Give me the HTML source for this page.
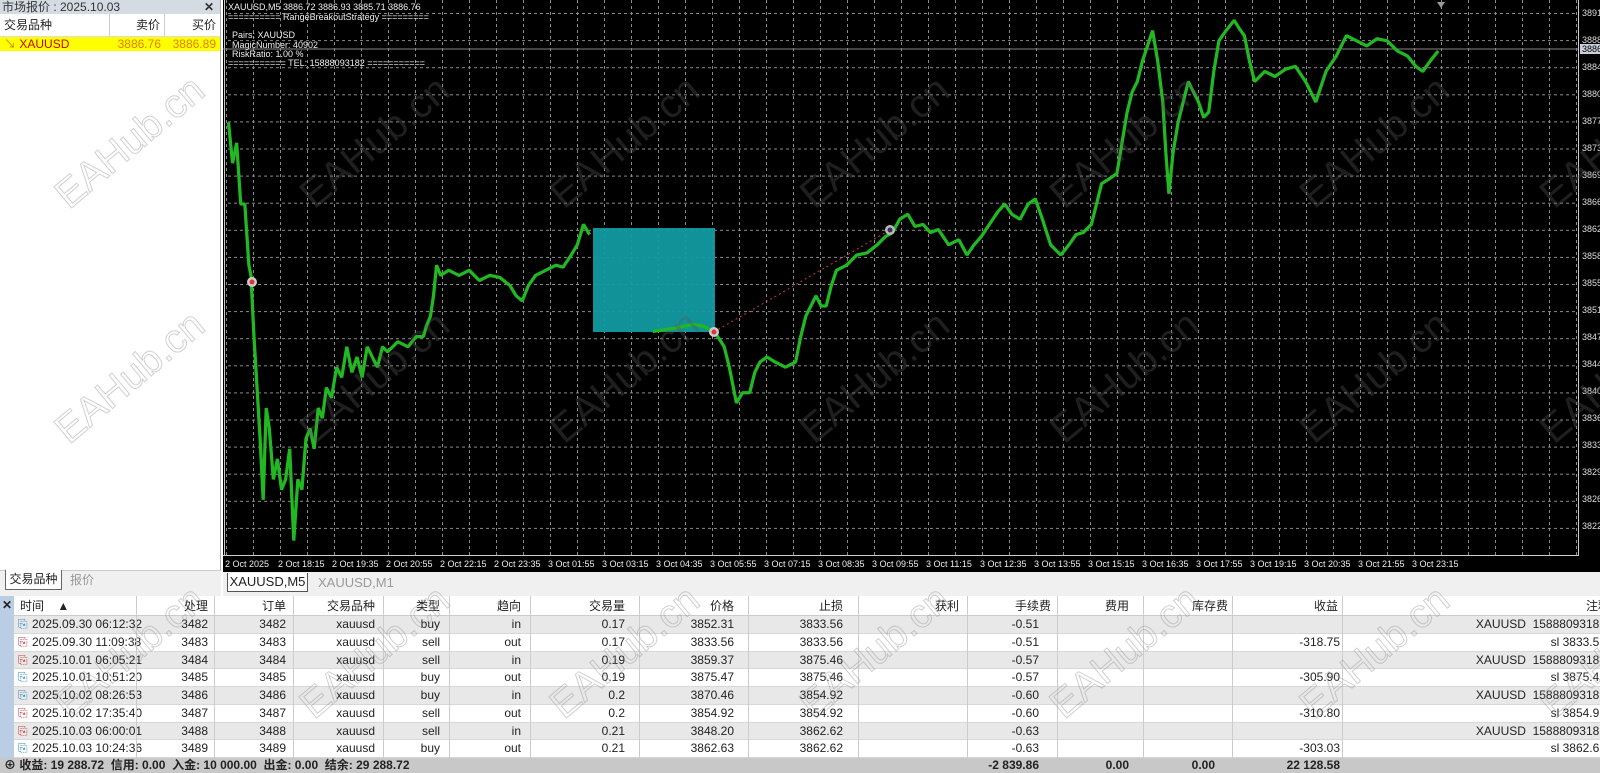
<!DOCTYPE html>
<html><head><meta charset="utf-8"><style>
*{margin:0;padding:0;box-sizing:border-box}
body{width:1600px;height:773px;overflow:hidden;background:#fff;font-family:"Liberation Sans","Noto Sans CJK SC",sans-serif;font-size:12px;color:#222;position:relative}
.abs{position:absolute}
#left{left:0;top:0;width:221px;height:596px;background:#fff;border-right:1px solid #aaa}
.ttl{height:14px;background:#d5dbe3;font-size:12px;line-height:14px;padding-left:2px;color:#333}
.hdr{height:23px;display:flex;border-bottom:1px solid #ddd;line-height:23px}
.hdr div,.yel div{padding:0 4px}
.yel{height:14px;background:#ffff00;display:flex;line-height:14px}
#chart{left:223px;top:0;width:1377px;height:572px;background:#000}
#tabs{left:223px;top:572px;width:1377px;height:24px;background:#f0f0f0}
#tbl{left:0;top:596px;width:1600px}
.row{position:absolute;left:14px;width:1586px;height:17.75px;border-bottom:1px solid #d8d8d8}
.row span,.th span{position:absolute;top:0;text-align:right;white-space:nowrap;line-height:17px}
.wm{position:absolute;font-size:40px;font-family:"Liberation Sans",sans-serif;color:transparent;-webkit-text-stroke:1px rgba(150,150,150,.45);transform:rotate(-40deg);white-space:nowrap}
.wmc{color:rgba(90,90,90,.35);-webkit-text-stroke:0}
</style></head><body>

<div id="left" class="abs">
 <div class="ttl">市场报价 : 2025.10.03<span style="float:right;margin-right:6px;font-weight:bold">✕</span></div>
 <div class="hdr"><div style="width:110px;border-right:1px solid #ccc">交易品种</div><div style="width:55px;text-align:right;border-right:1px solid #ccc">卖价</div><div style="width:55px;text-align:right">买价</div></div>
 <div class="yel"><div style="width:110px;color:#c00"><span style="color:#d08000">↘</span> XAUUSD</div><div style="width:55px;text-align:right;color:#e08000">3886.76</div><div style="width:55px;text-align:right;color:#e08000">3886.89</div></div>
 <div class="abs" style="left:0;top:570px;width:221px;height:26px;background:#f0f0f0;border-top:1px solid #ccc"></div>
 <div class="abs" style="left:5px;top:570px;width:57px;height:20px;background:#fff;border:1px solid #666;border-top:none;text-align:center;line-height:19px">交易品种</div>
 <div class="abs" style="left:70px;top:572px;color:#999;line-height:16px">报价</div>
</div>

<div id="chart" class="abs">
<svg width="1377" height="572" viewBox="223 0 1377 572" style="position:absolute;left:0;top:0">
 <defs>
  <pattern id="gv" x="10" y="0" width="27" height="6" patternUnits="userSpaceOnUse"><rect x="0" y="0" width="1" height="3" fill="#8a8a8a"/></pattern>
  <pattern id="gh" x="0" y="13" width="6" height="27.1" patternUnits="userSpaceOnUse"><rect x="0" y="0" width="3" height="1" fill="#8a8a8a"/></pattern>
 </defs>
 <rect x="225" y="0" width="1353" height="555" fill="url(#gv)"/>
 <rect x="225" y="0" width="1353" height="555" fill="url(#gh)"/>
 <line x1="223" y1="555.5" x2="1578" y2="555.5" stroke="#ccc"/>
 <line x1="1578.5" y1="0" x2="1578.5" y2="556" stroke="#ccc"/>
 <line x1="224.5" y1="0" x2="224.5" y2="556" stroke="#ccc"/>
 <line x1="223" y1="49" x2="1578" y2="49" stroke="#888"/>
 <rect x="593" y="228" width="122" height="104" fill="#129aa0" opacity="0.95"/>
 <g transform="scale(1.02)" fill="none" stroke="#22b822" stroke-width="3.2" stroke-linejoin="bevel">
  <polyline points="224,120 228,160 232,140 236,200 240,200 244,260 246,270 249,330 252,380 255,430 258,490 261,400 264,420 268,470 272,450 276,480 280,470 284,440 288,530 292,470 296,480 300,430 304,420 308,440 312,400 316,410 320,380 325,390 330,360 335,370 340,340 345,365 350,350 355,370 360,340 365,350 370,360 375,340 380,345 390,335 400,340 408,330 415,330 418,320 422,310 425,290 428,260 432,270 440,265 450,270 460,265 470,275 480,270 490,272 500,280 506,290 512,295 518,280 525,270 535,265 545,260 552,262 560,250 566,240 572,220 578,230"/>
  <polyline points="640,325 660,322 680,318 690,320 700,325 705,332 710,340 715,360 722,395 728,385 735,385 740,365 745,355 752,350 760,355 770,360 780,355 785,330 790,310 795,300 800,290 805,300 810,300 815,280 820,265 830,260 840,250 850,248 860,240 868,232 875,228 882,215 890,210 897,222 905,220 912,228 920,225 930,240 940,235 948,250 955,240 962,232 970,220 978,208 985,200 992,210 1000,215 1008,200 1015,195 1022,215 1030,240 1035,245 1040,250 1048,240 1055,230 1062,228 1070,220 1075,200 1080,180 1088,175 1095,170 1100,140 1105,110 1110,90 1115,80 1120,60 1125,45 1130,30 1135,60 1140,100 1143,150 1146,190 1150,150 1155,120 1160,100 1165,80 1170,90 1175,100 1180,115 1185,110 1190,70 1195,40 1202,30 1210,20 1215,28 1220,35 1225,60 1230,80 1240,70 1250,75 1260,68 1270,65 1280,80 1290,100 1295,85 1300,70 1310,55 1320,35 1330,40 1340,45 1350,38 1360,40 1370,50 1380,55 1388,65 1395,70 1402,60 1410,50"/>
 </g>
 <line x1="714" y1="332" x2="890" y2="230" stroke="#c04040" stroke-width="1" stroke-dasharray="2,3"/>
 <circle cx="252" cy="282" r="5" fill="#ccc"/><circle cx="252" cy="282" r="2.5" fill="#d33"/>
 <circle cx="714" cy="332" r="5" fill="#ccc"/><circle cx="714" cy="332" r="2.5" fill="#d33"/>
 <circle cx="890" cy="230" r="5" fill="#bbb"/><circle cx="890" cy="230" r="2.5" fill="#335"/>
 <path d="M1437 2 l4 6 l4 -6z" fill="#999"/>
 <g font-family="Liberation Sans,sans-serif" font-size="9" fill="#ddd">
  <text x="1582" y="16">3891</text><text x="1582" y="43">3888</text>
  <rect x="1580" y="44" width="20" height="10" fill="#c8d0dc"/><text x="1582" y="52" fill="#000">3886</text>
  <text x="1582" y="70">3884</text><text x="1582" y="97">3880</text><text x="1582" y="124">3877</text><text x="1582" y="151">3873</text><text x="1582" y="178">3869</text><text x="1582" y="205">3866</text><text x="1582" y="232">3862</text><text x="1582" y="259">3858</text><text x="1582" y="286">3855</text><text x="1582" y="313">3851</text><text x="1582" y="340">3847</text><text x="1582" y="367">3844</text><text x="1582" y="394">3840</text><text x="1582" y="421">3836</text><text x="1582" y="448">3833</text><text x="1582" y="475">3829</text><text x="1582" y="502">3826</text><text x="1582" y="529">3822</text>
  <g font-size="9" fill="#eee">
  <text x="225" y="567">2 Oct 2025</text><text x="278" y="567">2 Oct 18:15</text><text x="332" y="567">2 Oct 19:35</text><text x="386" y="567">2 Oct 20:55</text><text x="440" y="567">2 Oct 22:15</text><text x="494" y="567">2 Oct 23:35</text><text x="548" y="567">3 Oct 01:55</text><text x="602" y="567">3 Oct 03:15</text><text x="656" y="567">3 Oct 04:35</text><text x="710" y="567">3 Oct 05:55</text><text x="764" y="567">3 Oct 07:15</text><text x="818" y="567">3 Oct 08:35</text><text x="872" y="567">3 Oct 09:55</text><text x="926" y="567">3 Oct 11:15</text><text x="980" y="567">3 Oct 12:35</text><text x="1034" y="567">3 Oct 13:55</text><text x="1088" y="567">3 Oct 15:15</text><text x="1142" y="567">3 Oct 16:35</text><text x="1196" y="567">3 Oct 17:55</text><text x="1250" y="567">3 Oct 19:15</text><text x="1304" y="567">3 Oct 20:35</text><text x="1358" y="567">3 Oct 21:55</text><text x="1412" y="567">3 Oct 23:15</text>
  </g>
  <g fill="#eee" font-size="9">
  <text x="228" y="10">XAUUSD,M5  3886.72 3886.93 3885.71 3886.76</text>
  <text x="228" y="20">========== RangeBreakoutStrategy =========</text>
  <text x="232" y="38">Pairs: XAUUSD</text>
  <text x="232" y="48">MagicNumber: 40902</text>
  <text x="232" y="57">RiskRatio: 1.00 %</text>
  <text x="228" y="66">=========== TEL: 15888093182 ===========</text>
  </g>
 </g>
</svg>
</div>

<div id="tabs" class="abs">
 <div class="abs" style="left:4px;top:1px;width:81px;height:19px;background:#fff;border:1px solid #555;border-top:none;font-size:13px;text-align:center;line-height:18px">XAUUSD,M5</div>
 <div class="abs" style="left:95px;top:3px;color:#999;font-size:13px">XAUUSD,M1</div>
</div>

<div id="tbl" class="abs">
 <div class="abs" style="left:0;top:0;width:14px;height:162px;background:#b9cde5"><div style="font-weight:bold;text-align:center;line-height:18px">✕</div></div>
 <div class="row th" style="top:0;height:20px;background:#fff;border-bottom:1px solid #ccc">
  <span style="left:6px;text-align:left;line-height:20px">时间 &nbsp;&nbsp;&nbsp;▲</span>
  <span style="right:1392px;line-height:20px">处理</span><span style="right:1314px;line-height:20px">订单</span><span style="right:1225px;line-height:20px">交易品种</span><span style="right:1160px;line-height:20px">类型</span><span style="right:1079px;line-height:20px">趋向</span><span style="right:975px;line-height:20px">交易量</span><span style="right:866px;line-height:20px">价格</span><span style="right:757px;line-height:20px">止损</span><span style="right:641px;line-height:20px">获利</span><span style="right:549px;line-height:20px">手续费</span><span style="right:471px;line-height:20px">费用</span><span style="right:372px;line-height:20px">库存费</span><span style="right:262px;line-height:20px">收益</span><span style="right:-10px;line-height:20px">注释</span>
 </div>
 <div class="abs" style="left:0;top:162px;width:1600px;height:15px;background:#c8c8c8;font-weight:bold;line-height:15px;font-size:12px">
  <span style="position:absolute;left:4px">⊕ 收益: 19 288.72 &nbsp;信用: 0.00 &nbsp;入金: 10 000.00 &nbsp;出金: 0.00 &nbsp;结余: 29 288.72</span>
  <span style="position:absolute;right:561px">-2 839.86</span><span style="position:absolute;right:471px">0.00</span><span style="position:absolute;right:385px">0.00</span><span style="position:absolute;right:260px">22 128.58</span>
 </div>
</div>
<div class="abs" style="left:0;top:616px;width:1600px">
 <div class="row" style="top:0;background:#e8e8e8"><span style="left:4px;color:#3a8ac0">⎘</span><span style="left:18px;text-align:left">2025.09.30 06:12:32</span><span style="right:1392px">3482</span><span style="right:1314px">3482</span><span style="right:1225px">xauusd</span><span style="right:1160px">buy</span><span style="right:1079px">in</span><span style="right:975px">0.17</span><span style="right:866px">3852.31</span><span style="right:757px">3833.56</span><span style="right:561px">-0.51</span><span style="right:-6px">XAUUSD &nbsp;15888093182</span></div>
 <div class="row" style="top:17.75px"><span style="left:4px;color:#c04040">⎘</span><span style="left:18px;text-align:left">2025.09.30 11:09:38</span><span style="right:1392px">3483</span><span style="right:1314px">3483</span><span style="right:1225px">xauusd</span><span style="right:1160px">sell</span><span style="right:1079px">out</span><span style="right:975px">0.17</span><span style="right:866px">3833.56</span><span style="right:757px">3833.56</span><span style="right:561px">-0.51</span><span style="right:260px">-318.75</span><span style="right:-6px">sl 3833.56</span></div>
 <div class="row" style="top:35.5px;background:#e8e8e8"><span style="left:4px;color:#c04040">⎘</span><span style="left:18px;text-align:left">2025.10.01 06:05:21</span><span style="right:1392px">3484</span><span style="right:1314px">3484</span><span style="right:1225px">xauusd</span><span style="right:1160px">sell</span><span style="right:1079px">in</span><span style="right:975px">0.19</span><span style="right:866px">3859.37</span><span style="right:757px">3875.46</span><span style="right:561px">-0.57</span><span style="right:-6px">XAUUSD &nbsp;15888093182</span></div>
 <div class="row" style="top:53.25px"><span style="left:4px;color:#3a8ac0">⎘</span><span style="left:18px;text-align:left">2025.10.01 10:51:20</span><span style="right:1392px">3485</span><span style="right:1314px">3485</span><span style="right:1225px">xauusd</span><span style="right:1160px">buy</span><span style="right:1079px">out</span><span style="right:975px">0.19</span><span style="right:866px">3875.47</span><span style="right:757px">3875.46</span><span style="right:561px">-0.57</span><span style="right:260px">-305.90</span><span style="right:-6px">sl 3875.46</span></div>
 <div class="row" style="top:71px;background:#e8e8e8"><span style="left:4px;color:#3a8ac0">⎘</span><span style="left:18px;text-align:left">2025.10.02 08:26:53</span><span style="right:1392px">3486</span><span style="right:1314px">3486</span><span style="right:1225px">xauusd</span><span style="right:1160px">buy</span><span style="right:1079px">in</span><span style="right:975px">0.2</span><span style="right:866px">3870.46</span><span style="right:757px">3854.92</span><span style="right:561px">-0.60</span><span style="right:-6px">XAUUSD &nbsp;15888093182</span></div>
 <div class="row" style="top:88.75px"><span style="left:4px;color:#c04040">⎘</span><span style="left:18px;text-align:left">2025.10.02 17:35:40</span><span style="right:1392px">3487</span><span style="right:1314px">3487</span><span style="right:1225px">xauusd</span><span style="right:1160px">sell</span><span style="right:1079px">out</span><span style="right:975px">0.2</span><span style="right:866px">3854.92</span><span style="right:757px">3854.92</span><span style="right:561px">-0.60</span><span style="right:260px">-310.80</span><span style="right:-6px">sl 3854.92</span></div>
 <div class="row" style="top:106.5px;background:#e8e8e8"><span style="left:4px;color:#c04040">⎘</span><span style="left:18px;text-align:left">2025.10.03 06:00:01</span><span style="right:1392px">3488</span><span style="right:1314px">3488</span><span style="right:1225px">xauusd</span><span style="right:1160px">sell</span><span style="right:1079px">in</span><span style="right:975px">0.21</span><span style="right:866px">3848.20</span><span style="right:757px">3862.62</span><span style="right:561px">-0.63</span><span style="right:-6px">XAUUSD &nbsp;15888093182</span></div>
 <div class="row" style="top:124.25px"><span style="left:4px;color:#3a8ac0">⎘</span><span style="left:18px;text-align:left">2025.10.03 10:24:36</span><span style="right:1392px">3489</span><span style="right:1314px">3489</span><span style="right:1225px">xauusd</span><span style="right:1160px">buy</span><span style="right:1079px">out</span><span style="right:975px">0.21</span><span style="right:866px">3862.63</span><span style="right:757px">3862.62</span><span style="right:561px">-0.63</span><span style="right:260px">-303.03</span><span style="right:-6px">sl 3862.62</span></div>
</div>
<div class="abs" style="left:0;top:596px;width:1600px;height:162px;pointer-events:none">
 <div class="abs" style="left:136px;top:0;width:1px;height:162px;background:#ccc"></div>
 <div class="abs" style="left:214px;width:1px;height:162px;background:#ccc"></div>
 <div class="abs" style="left:293px;width:1px;height:162px;background:#ccc"></div>
 <div class="abs" style="left:383px;width:1px;height:162px;background:#ccc"></div>
 <div class="abs" style="left:449px;width:1px;height:162px;background:#ccc"></div>
 <div class="abs" style="left:530px;width:1px;height:162px;background:#ccc"></div>
 <div class="abs" style="left:639px;width:1px;height:162px;background:#ccc"></div>
 <div class="abs" style="left:748px;width:1px;height:162px;background:#ccc"></div>
 <div class="abs" style="left:858px;width:1px;height:162px;background:#ccc"></div>
 <div class="abs" style="left:967px;width:1px;height:162px;background:#ccc"></div>
 <div class="abs" style="left:1057px;width:1px;height:162px;background:#ccc"></div>
 <div class="abs" style="left:1143px;width:1px;height:162px;background:#ccc"></div>
 <div class="abs" style="left:1232px;width:1px;height:162px;background:#ccc"></div>
 <div class="abs" style="left:1342px;width:1px;height:162px;background:#ccc"></div>
</div>

<div class="wm" style="left:40px;top:120px">EAHub.cn</div>
<div class="wm wmc" style="left:285px;top:120px">EAHub.cn</div>
<div class="wm wmc" style="left:535px;top:120px">EAHub.cn</div>
<div class="wm wmc" style="left:785px;top:120px">EAHub.cn</div>
<div class="wm wmc" style="left:1035px;top:120px">EAHub.cn</div>
<div class="wm wmc" style="left:1285px;top:120px">EAHub.cn</div>
<div class="wm wmc" style="left:1525px;top:120px">EAHub.cn</div>
<div class="wm" style="left:40px;top:355px">EAHub.cn</div>
<div class="wm wmc" style="left:285px;top:355px">EAHub.cn</div>
<div class="wm wmc" style="left:535px;top:355px">EAHub.cn</div>
<div class="wm wmc" style="left:785px;top:355px">EAHub.cn</div>
<div class="wm wmc" style="left:1035px;top:355px">EAHub.cn</div>
<div class="wm wmc" style="left:1285px;top:355px">EAHub.cn</div>
<div class="wm wmc" style="left:1525px;top:355px">EAHub.cn</div>
<div class="wm" style="left:40px;top:630px">EAHub.cn</div>
<div class="wm" style="left:285px;top:630px">EAHub.cn</div>
<div class="wm" style="left:535px;top:630px">EAHub.cn</div>
<div class="wm" style="left:785px;top:630px">EAHub.cn</div>
<div class="wm" style="left:1035px;top:630px">EAHub.cn</div>
<div class="wm" style="left:1285px;top:630px">EAHub.cn</div>
<div class="wm" style="left:1525px;top:630px">EAHub.cn</div>
</body></html>
